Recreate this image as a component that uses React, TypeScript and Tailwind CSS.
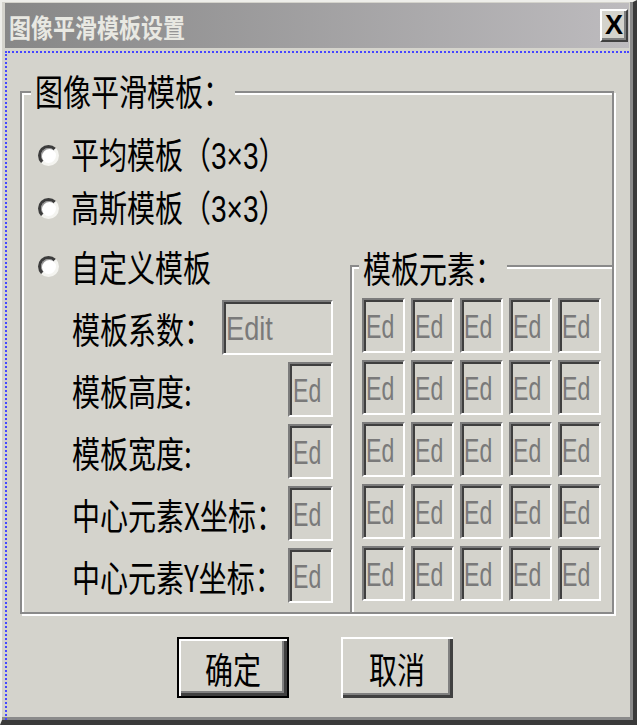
import type { ReactNode } from "react";

function Tall({ children }: { children: ReactNode }) {
  return <span className="inline-block scale-y-[1.3]">{children}</span>;
}

// "3×3" uses the latin font so the × stays narrow
function Radio({ label, size }: { label: string; size?: boolean }) {
  return (
    <div className="flex h-[40px] items-center gap-[12px] pl-[16px]">
      <span className="h-[21px] w-[21px] shrink-0 rounded-full border-[3px] border-t-[#3c3c3c] border-l-[#3c3c3c] border-r-[#f4f4f0] border-b-[#f4f4f0] bg-white shadow-[inset_1px_1px_0_#9a9a9a]" />
      <Tall>
        {label}
        {size && (
          <>
            （<span className="font-['Liberation_Sans',Arial,sans-serif]">3×3</span>）
          </>
        )}
      </Tall>
    </div>
  );
}

function EditBox({ size }: { size: "wide" | "sm" | "grid" }) {
  const box = size === "wide" ? "w-[111px] pl-[2px]" : size === "sm" ? "w-[45px] pl-[3px]" : "w-[43px] pl-[2px]";
  const txt = size === "wide" ? "scale-x-[0.8]" : "scale-x-[0.68]";
  return (
    <div className={`flex h-[55px] shrink-0 items-center overflow-hidden border-2 border-t-[#7c7c7c] border-l-[#7c7c7c] border-r-white border-b-white shadow-[inset_2px_2px_0_#3f3f3f] ${box}`}>
      <span className={`inline-block origin-left font-['Liberation_Sans',Arial,sans-serif] text-[34px] leading-none text-[#7a7a7a] ${txt}`}>
        {size === "wide" ? "Edit" : "Ed"}
      </span>
    </div>
  );
}

function FieldRow({ label, wide }: { label: string; wide?: boolean }) {
  return (
    <div className="flex h-[55px] items-center justify-between pl-[50px] pr-[17px]">
      <Tall>{label}</Tall>
      <EditBox size={wide ? "wide" : "sm"} />
    </div>
  );
}

const cells = Array.from({ length: 25 }, (_, i) => i);

export default function App() {
  return (
    <div className="flex h-[725px] w-[637px] flex-col overflow-hidden border-t-2 border-l-2 border-r-4 border-b-[5px] border-[#eeeeea] border-r-[#3a3a3a] border-b-[#3a3a3a] bg-[#d4d3cc] pl-[3px] pr-[4px] pt-[1px] font-['Noto_Sans_CJK_SC','Noto_Sans',sans-serif] text-[28px] leading-none text-black shadow-[inset_-3px_-3px_0_#8a8a8a]">
      {/* title bar */}
      <div className="flex h-[45px] shrink-0 items-center justify-between bg-linear-to-r from-[#878787] to-[#bdbbbe] pl-[4px]">
        <span className="inline-block scale-y-[1.2] text-[22px] font-bold text-[#e8e8e2]">图像平滑模板设置</span>
        <div className="mr-[1px] flex h-[33px] w-[28px] items-center justify-center border-2 border-t-white border-l-white border-r-[#404040] border-b-[#404040] bg-[#d4d3cc] shadow-[inset_-2px_-2px_0_#808080] font-['Liberation_Sans',Arial,sans-serif] text-[27px] font-bold leading-none">
          X
        </div>
      </div>

      {/* body */}
      <div className="mt-[3px] flex flex-1 flex-col border-t-2 border-l-2 border-dotted border-[#4646ff]">
        <div className="relative ml-[13px] mt-[38px] flex h-[523px] w-[594px] flex-col border-2 border-[#8a8a8a] pt-[42px] shadow-[inset_2px_2px_0_#fff,2px_2px_0_#fff]">
          <span className="absolute -top-[23px] left-[9px] flex h-[40px] items-center bg-[#d4d3cc] px-[4px]">
            <Tall>图像平滑模板：</Tall>
          </span>

          <Radio label="平均模板" size />
          <div className="mt-[13px]">
            <Radio label="高斯模板" size />
          </div>

          <div className="mt-[18px] flex flex-1">
            <div className="flex w-[328px] shrink-0 flex-col">
              <Radio label="自定义模板" />
              <div className="mt-[14px] flex flex-col gap-[7px]">
                <FieldRow label="模板系数：" wide />
                <FieldRow label="模板高度:" />
                <FieldRow label="模板宽度:" />
                <FieldRow label="中心元素X坐标：" />
                <FieldRow label="中心元素Y坐标：" />
              </div>
            </div>

            <div className="relative mt-[19px] flex-1 border-t-2 border-l-2 border-[#8a8a8a] pl-[10px] pt-[31px] shadow-[inset_2px_2px_0_#fff]">
              <span className="absolute -top-[20px] left-[7px] flex h-[40px] items-center bg-[#d4d3cc] px-[4px]">
                <Tall>模板元素：</Tall>
              </span>
              <div className="grid grid-cols-[repeat(5,43px)] gap-x-[6px] gap-y-[7px]">
                {cells.map((i) => (
                  <EditBox key={i} size="grid" />
                ))}
              </div>
            </div>
          </div>
        </div>

        {/* buttons */}
        <div className="mt-[23px] flex gap-[52px] pl-[170px]">
          <button
            type="button"
            className="flex h-[61px] w-[112px] items-center justify-center border-2 border-black bg-[#d4d3cc] shadow-[inset_2px_2px_0_#fff,inset_-3px_-3px_0_#404040,inset_-5px_-5px_0_#808080]"
          >
            <Tall>确定</Tall>
          </button>
          <button
            type="button"
            className="flex h-[61px] w-[112px] items-center justify-center bg-[#d4d3cc] shadow-[inset_2px_2px_0_#fff,inset_-3px_-3px_0_#404040,inset_-5px_-5px_0_#808080]"
          >
            <Tall>取消</Tall>
          </button>
        </div>
      </div>
    </div>
  );
}
